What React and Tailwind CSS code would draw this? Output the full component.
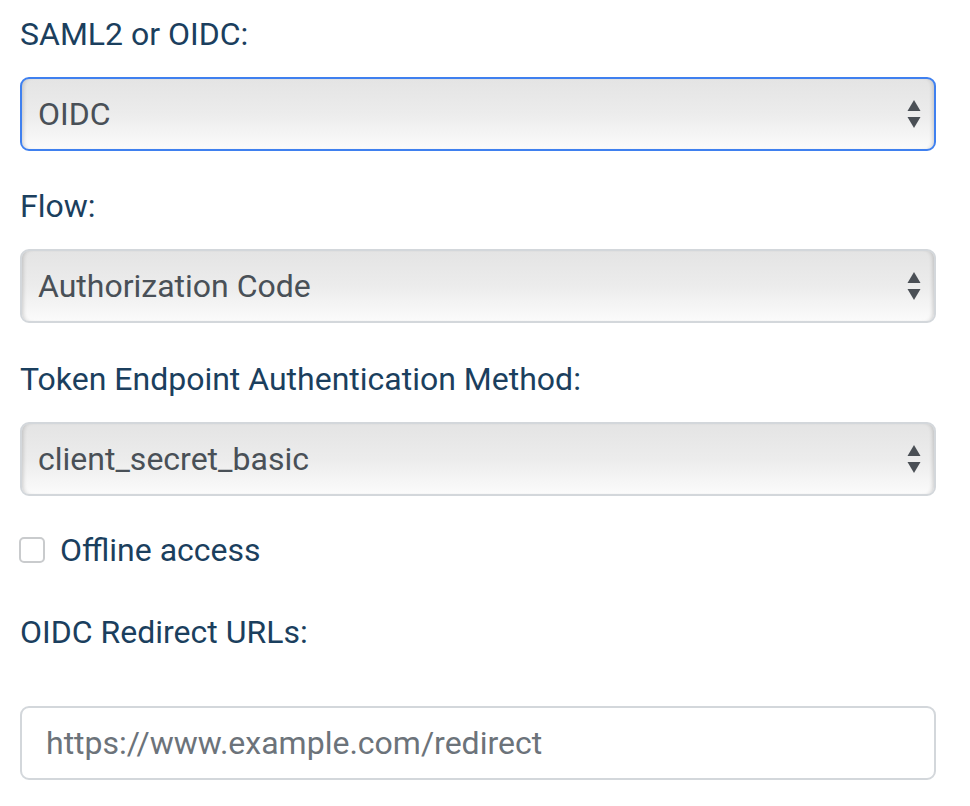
import { useState } from 'react';

const FONT = { fontFamily: 'Roboto, "Liberation Sans", sans-serif' };

function Arrows() {
  return (
    <svg
      className="pointer-events-none absolute right-[15px] top-1/2 -translate-y-1/2"
      width="14"
      height="28"
      viewBox="0 0 14 28"
    >
      <path d="M7 0 L13.5 11 L0.5 11 Z" fill="#4a4f55" />
      <path d="M0.5 17 L13.5 17 L7 28 Z" fill="#4a4f55" />
    </svg>
  );
}

function Select({ value, options, focused, onChange }) {
  return (
    <div className="relative">
      <select
        value={value}
        onChange={(e) => onChange(e.target.value)}
        style={FONT}
        className={`block h-[74px] w-full appearance-none rounded-[9px] border-2 bg-gradient-to-b from-[#e4e4e4] via-[#ececec] to-[#fbfbfb] pl-[16px] pr-12 text-[32px] text-[#495057] outline-none shadow-[inset_4px_0_4px_-3px_rgba(0,0,0,0.18),inset_-4px_0_4px_-3px_rgba(0,0,0,0.18)] ${
          focused ? 'border-[#3f80ef]' : 'border-[#d3d7db]'
        }`}
      >
        {options.map((o) => (
          <option key={o} value={o}>
            {o}
          </option>
        ))}
      </select>
      <Arrows />
    </div>
  );
}

export default function App() {
  const [proto, setProto] = useState('OIDC');
  const [flow, setFlow] = useState('Authorization Code');
  const [method, setMethod] = useState('client_secret_basic');
  const [offline, setOffline] = useState(false);

  return (
    <div className="w-[970px] bg-white px-[20px] pt-[10px] pb-[27px] pr-[34px]" style={FONT}>
      <label className="block text-[32px] leading-[48px] text-[#1b3f5e]">SAML2 or OIDC:</label>
      <div className="mt-[19px]">
        <Select value={proto} options={['SAML2', 'OIDC']} focused onChange={setProto} />
      </div>

      <label className="mt-[31px] block text-[32px] leading-[48px] text-[#1b3f5e]">Flow:</label>
      <div className="mt-[19px]">
        <Select
          value={flow}
          options={['Authorization Code', 'Implicit', 'Hybrid']}
          onChange={setFlow}
        />
      </div>

      <label className="mt-[32px] block text-[32px] leading-[48px] text-[#1b3f5e]">
        Token Endpoint Authentication Method:
      </label>
      <div className="mt-[19px]">
        <Select
          value={method}
          options={['client_secret_basic', 'client_secret_post', 'private_key_jwt', 'none']}
          onChange={setMethod}
        />
      </div>

      <label className="mt-[30px] flex h-[48px] cursor-pointer items-center">
        <input
          type="checkbox"
          checked={offline}
          onChange={(e) => setOffline(e.target.checked)}
          className="ml-[-1px] h-[26px] w-[26px] appearance-none rounded-[5px] border-2 border-[#c9cbcd] bg-white checked:bg-[#3f80ef]"
        />
        <span className="ml-[15px] text-[32px] leading-[48px] text-[#1b3f5e]">Offline access</span>
      </label>

      <label className="mt-[34px] block text-[32px] leading-[48px] text-[#1b3f5e]">
        OIDC Redirect URLs:
      </label>
      <input
        type="text"
        placeholder="https://www.example.com/redirect"
        style={FONT}
        className="mt-[50px] block h-[74px] w-full rounded-[9px] border-2 border-[#d3d7db] bg-white px-[24px] text-[32px] text-[#495057] outline-none placeholder:text-[#6c737a]"
      />
    </div>
  );
}
